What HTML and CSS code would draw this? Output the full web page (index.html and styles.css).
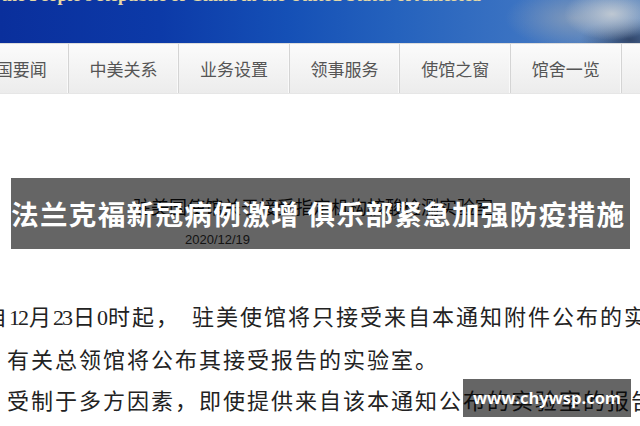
FILE: index.html
```html
<!DOCTYPE html>
<html lang="zh-CN">
<head>
<meta charset="utf-8">
<title>驻美国使馆</title>
<link rel="stylesheet" href="styles.css">
</head>
<body>
<div class="page">
  <header class="masthead">
    <div class="masthead-title">Embassy of the People's Republic of China in the United States of America</div>
  </header>
  <nav class="nav">
    <a class="nav-item">中国要闻</a>
    <a class="nav-item">中美关系</a>
    <a class="nav-item">业务设置</a>
    <a class="nav-item">领事服务</a>
    <a class="nav-item">使馆之窗</a>
    <a class="nav-item">馆舍一览</a>
    <a class="nav-item">联系我们</a>
  </nav>
  <main class="article">
    <h1 class="article-title">驻美国使馆关于接受指定机构核酸检测实验室</h1>
    <div class="article-date">2020/12/19</div>
    <div class="article-body">
      <div class="line first">自<span class="num">12</span>月<span class="num">23</span>日<span class="num">0</span>时起，<span class="gap"></span>驻美使馆将只接受来自本通知附件公布的实验室</div>
      <div class="line">有关总领馆将公布其接受报告的实验室。</div>
      <div class="line">受制于多方因素，即使提供来自该本通知公布的实验室的报告</div>
    </div>
  </main>
  <div class="banner">法兰克福新冠病例激增 俱乐部紧急加强防疫措施</div>
  <div class="watermark">www.chywsp.com</div>
</div>
</body>
</html>
```
FILE: styles.css
```css
html, body {
  margin: 0;
  padding: 0;
  background: #ffffff;
}
body {
  width: 640px;
  height: 426px;
  overflow: hidden;
  font-family: "Noto Sans CJK SC", "Noto Sans", sans-serif;
}
.page {
  position: relative;
  width: 640px;
  height: 426px;
  overflow: hidden;
}
.masthead {
  height: 43px;
  overflow: hidden;
  background:
    radial-gradient(ellipse 48px 26px at 612px 14px, rgba(205, 210, 214, 0.85), rgba(160, 172, 190, 0) 100%),
    radial-gradient(ellipse 70px 30px at 575px 18px, rgba(150, 165, 185, 0.7), rgba(120, 140, 170, 0) 100%),
    radial-gradient(ellipse 50px 22px at 630px 40px, rgba(40, 55, 85, 0.8), rgba(40, 55, 85, 0) 100%),
    linear-gradient(90deg, #0a2f9c 0%, #0c3aa8 25%, #1550b6 45%, #2562bd 62%, #3a72c2 80%, #5c86bd 100%);
}
.masthead-title {
  margin: -13px 0 0 -92px;
  font-family: "Liberation Serif", serif;
  font-weight: bold;
  font-size: 18px;
  line-height: 16px;
  color: #e6d9a6;
  white-space: nowrap;
}
.nav {
  display: flex;
  height: 49px;
  border-top: 1px solid #dcdcdc;
  border-bottom: 1px solid #e6e6e6;
  background: linear-gradient(#fbfbfb, #ececec);
  margin-left: -42px;
  width: 800px;
}
.nav-item {
  flex: none;
  width: 109.6px;
  border-right: 1px solid #d4d4d4;
  box-shadow: inset -1px 0 0 #fafafa;
  display: flex;
  align-items: center;
  justify-content: center;
  font-size: 17px;
  color: #555555;
  padding-bottom: 1px;
}
.article {
  padding-top: 101px;
}
.article-title {
  margin: 0 0 0 133px;
  font-size: 18px;
  line-height: 22px;
  font-weight: normal;
  color: #111111;
  white-space: nowrap;
}
.article-date {
  margin: 15px 0 0 185px;
  font-family: "Liberation Sans", Arial, sans-serif;
  font-size: 13px;
  line-height: 16px;
  color: #333333;
}
.article-body {
  margin-top: 47px;
  padding-left: 7px;
  font-size: 22px;
  line-height: 41px;
  letter-spacing: 2px;
  color: #222222;
}
.line {
  white-space: nowrap;
}
.line.first {
  margin-left: -22px;
}
.num {
  font-family: "Liberation Serif", serif;
  font-size: 22px;
  letter-spacing: -2px;
  padding-right: 2px;
}
.gap {
  display: inline-block;
  width: 12px;
}
.banner {
  position: absolute;
  left: 11px;
  top: 178px;
  width: 619px;
  height: 71px;
  background: rgba(0, 0, 0, 0.605);
  color: #ffffff;
  font-weight: bold;
  font-size: 27.6px;
  letter-spacing: 1.3px;
  line-height: 71px;
  white-space: nowrap;
  overflow: hidden;
}
.watermark {
  position: absolute;
  left: 463px;
  top: 379px;
  width: 168px;
  height: 38px;
  background: rgba(0, 0, 0, 0.605);
  color: #ffffff;
  font-family: "Open Sans", sans-serif;
  font-weight: bold;
  font-size: 16.5px;
  line-height: 38px;
  text-align: center;
}
```
